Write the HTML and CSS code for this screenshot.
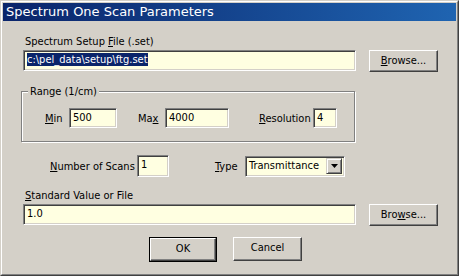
FILE: index.html
```html
<!DOCTYPE html>
<html lang="en">
<head>
    <meta charset="UTF-8" />
    <title>Spectrum One Scan Parameters</title>
    <link rel="stylesheet" href="styles.css">
</head>
<body>
  <div class="window">
    <div class="frame">
      <div class="titlebar">Spectrum One Scan Parameters</div>

      <div class="content">
        <div class="label file-label">Spectrum Setup <u>F</u>ile (.set)</div>
        <div class="row">
          <div class="field wide"><span class="selected">c:\pel_data\setup\ftg.set</span></div>
          <div class="button browse"><u>B</u>rowse...</div>
        </div>

        <div class="group">
          <span class="legend">Range (1/cm)</span>
          <div class="group-row">
            <span class="label min-label"><u>M</u>in</span>
            <div class="field min">500</div>
            <span class="label max-label">Ma<u>x</u></span>
            <div class="field max">4000</div>
            <span class="label res-label"><u>R</u>esolution</span>
            <div class="field res">4</div>
          </div>
        </div>

        <div class="row scans-row">
          <span class="label scans-label"><u>N</u>umber of Scans</span>
          <div class="field scans">1</div>
          <span class="label type-label"><u>T</u>ype</span>
          <div class="field select">
            <span>Transmittance</span>
            <div class="drop">
              <svg width="7" height="4" viewBox="0 0 7 4"><path d="M0 0h7L3.5 4z" fill="#000"/></svg>
            </div>
          </div>
        </div>

        <div class="label std-label"><u>S</u>tandard Value or File</div>
        <div class="row">
          <div class="field wide">1.0</div>
          <div class="button browse">Bro<u>w</u>se...</div>
        </div>

        <div class="actions">
          <div class="default"><div class="button ok">OK</div></div>
          <div class="button cancel">Cancel</div>
        </div>
      </div>
    </div>
  </div>
</body>
</html>
```

FILE: styles.css
```css
* {
    margin: 0;
    padding: 0;
    box-sizing: border-box;
}

body {
    font-family: 'DejaVu Sans Condensed', 'DejaVu Sans', Tahoma, sans-serif;
    font-size: 11px;
    color: #000;
    background: #d4d0c8;
}

.window {
    width: 459px;
    height: 276px;
    border: 1px solid;
    border-color: #d4d0c8 #404040 #404040 #d4d0c8;
}

.frame {
    height: 100%;
    border: 1px solid;
    border-color: #fff #808080 #808080 #fff;
    padding: 1px;
    background: #d4d0c8;
}

.titlebar {
    height: 18px;
    padding-left: 3px;
    line-height: 18px;
    font-family: 'DejaVu Sans', Tahoma, sans-serif;
    font-size: 13px;
    color: #fff;
    background: linear-gradient(90deg, #0a246a, #1f64b1);
}

.content {
    padding-left: 20px;
}

.label {
    line-height: 13px;
    white-space: nowrap;
}

.file-label {
    margin-top: 14px;
    padding-left: 2px;
}

.row {
    display: flex;
    align-items: flex-start;
    margin-top: 2px;
}

.field {
    height: 21px;
    border: 1px solid;
    border-color: #808080 #fff #fff #808080;
    box-shadow: inset 1px 1px 0 #404040, inset -1px -1px 0 #d4d0c8;
    background: #ffffe1;
    padding: 2px 0 0 3px;
    line-height: 14px;
    white-space: nowrap;
}

.wide {
    width: 333px;
}

.selected {
    background: #0a246a;
    color: #fff;
}

.button {
    height: 22px;
    border: 1px solid;
    border-color: #fff #404040 #404040 #fff;
    box-shadow: inset -1px -1px 0 #808080;
    text-align: center;
    line-height: 19px;
}

.browse {
    width: 69px;
    margin-left: 13px;
}

.group {
    position: relative;
    width: 334px;
    height: 51px;
    margin: 19px 0 0 -2px;
    border: 1px solid #808080;
    box-shadow: inset 1px 1px 0 #fff, 1px 1px 0 #fff;
}

.legend {
    position: absolute;
    top: -7px;
    left: 6px;
    padding: 0 2px;
    line-height: 13px;
    background: #d4d0c8;
}

.group-row {
    display: flex;
    align-items: center;
    margin-top: 16px;
    padding-left: 23px;
}

.group-row .field {
    height: 20px;
}

.min-label {
    width: 24px;
}

.min {
    width: 48px;
}

.max-label {
    width: 27px;
    margin-left: 21px;
}

.max {
    width: 64px;
}

.res-label {
    width: 54px;
    margin-left: 30px;
}

.res {
    width: 24px;
}

.scans-row {
    margin-top: 13px;
    align-items: center;
}

.scans-label {
    width: 87px;
    margin-left: 27px;
}

.scans {
    width: 32px;
    height: 22px;
}

.type-label {
    width: 30px;
    margin-left: 46px;
}

.select {
    display: flex;
    justify-content: space-between;
    width: 100px;
    padding-right: 2px;
}

.drop {
    width: 16px;
    height: 16px;
    margin-top: -1px;
    border: 1px solid;
    border-color: #d4d0c8 #404040 #404040 #d4d0c8;
    box-shadow: inset 1px 1px 0 #fff, inset -1px -1px 0 #808080;
    background: #d4d0c8;
    display: flex;
    align-items: center;
    justify-content: center;
}

.std-label {
    margin-top: 12px;
    padding-left: 2px;
}

.actions {
    display: flex;
    gap: 16px;
    margin: 11px 0 0 126px;
}

.default {
    border: 1px solid #000;
}

.ok {
    width: 66px;
    height: 23px;
}

.cancel {
    width: 69px;
    height: 24px;
}
```
